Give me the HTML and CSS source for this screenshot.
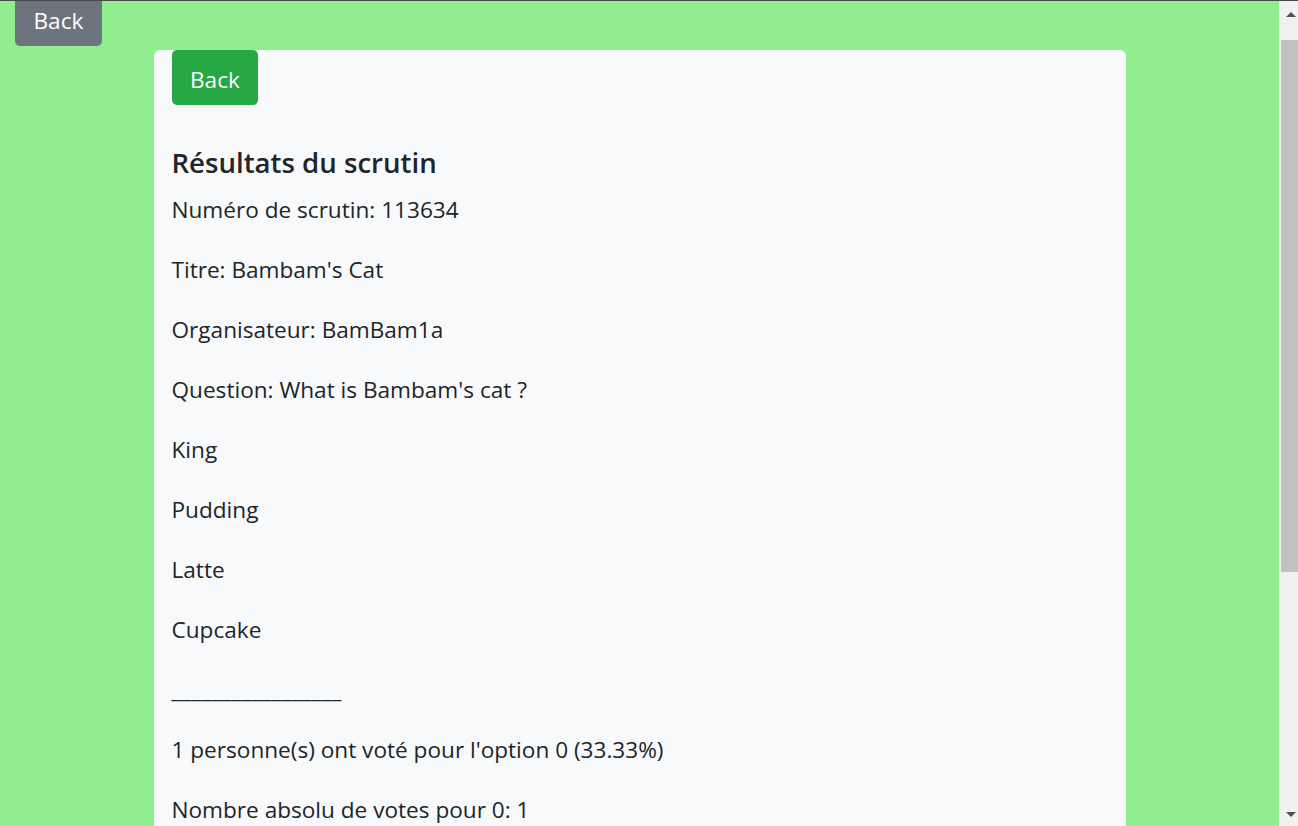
FILE: index.html
```html
<!DOCTYPE html>
<html lang="fr">
<head>
<meta charset="utf-8">
<title>Résultats du scrutin</title>
<link rel="stylesheet" href="styles.css">
</head>
<body>
<div class="page">
  <a class="btn btn-secondary top-back" href="#">Back</a>
  <main class="card">
    <a class="btn btn-success" href="#">Back</a>
    <h4 class="title">Résultats du scrutin</h4>
    <p>Numéro de scrutin: 113634</p>
    <p>Titre: Bambam's Cat</p>
    <p>Organisateur: BamBam1a</p>
    <p>Question: What is Bambam's cat ?</p>
    <p>King</p>
    <p>Pudding</p>
    <p>Latte</p>
    <p>Cupcake</p>
    <p class="sep">_________________</p>
    <p>1 personne(s) ont voté pour l'option 0 (33.33%)</p>
    <p>Nombre absolu de votes pour 0: 1</p>
    <p class="sep">_________________</p>
    <p>1 personne(s) ont voté pour l'option 1 (33.33%)</p>
    <p>Nombre absolu de votes pour 1: 1</p>
  </main>
</div>
<div class="scrollbar" aria-hidden="true">
  <span class="arrow arrow-up"></span>
  <span class="thumb"></span>
  <span class="arrow arrow-down"></span>
</div>
</body>
</html>
```
FILE: styles.css
```css
html, body {
  margin: 0;
  padding: 0;
}
body {
  background: #90ee90;
  font-family: "Open Sans", "Noto Sans", sans-serif;
  font-size: 22.6px;
  line-height: 30px;
  color: #212529;
  border-top: 1px solid #4a4a4a;
}
.page {
  position: relative;
  width: 1279px;
  padding-top: 49px;
}
.btn {
  display: inline-block;
  color: #fff;
  text-decoration: none;
  font-size: 22.6px;
  line-height: 30px;
  padding: 15px 18.5px 10px;
  border-radius: 5px;
}
.btn-secondary {
  background: #6c757d;
}
.btn-success {
  background: #28a745;
}
.top-back {
  position: absolute;
  left: 15px;
  top: -10px;
}
.card {
  width: 936px;
  margin: 0 auto;
  background: #f8f9fa;
  border-radius: 6px;
  padding: 0 18px 40px;
}
.title {
  font-size: 27.6px;
  font-weight: 600;
  line-height: 36px;
  margin: 39px 0 15px;
}
p {
  margin: 0 0 30px;
}
.sep {
  letter-spacing: 0.1px;
}
.scrollbar {
  position: fixed;
  top: 1px;
  right: 0;
  bottom: 0;
  width: 19px;
  background: #f1f1f1;
}
.thumb {
  position: absolute;
  left: 2px;
  right: 0;
  top: 39px;
  height: 532px;
  background: #c1c1c1;
}
.arrow {
  position: absolute;
  left: 7px;
  width: 0;
  height: 0;
  border-left: 5px solid transparent;
  border-right: 5px solid transparent;
}
.arrow-up {
  top: 11px;
  border-bottom: 5px solid #505050;
}
.arrow-down {
  bottom: 9px;
  border-top: 5px solid #505050;
}
```
